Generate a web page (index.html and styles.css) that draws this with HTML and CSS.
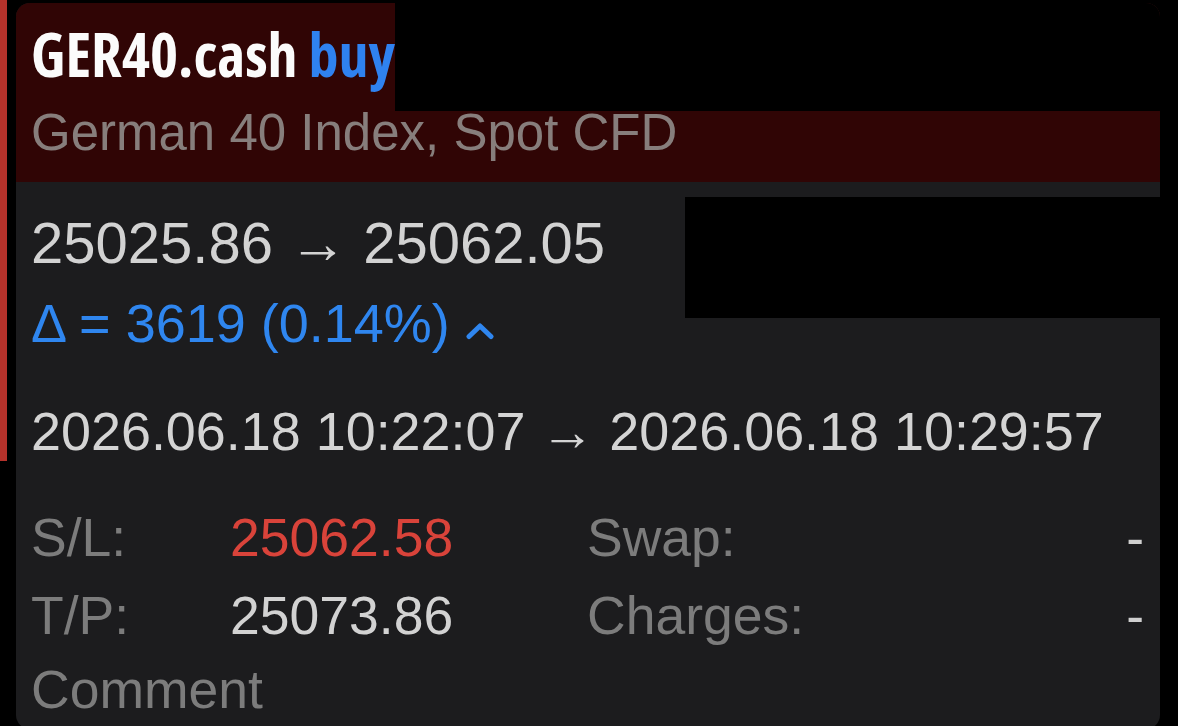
FILE: index.html
```html
<!DOCTYPE html>
<html lang="en">
<head>
<meta charset="utf-8">
<title>GER40.cash buy</title>
<link rel="stylesheet" href="styles.css">
</head>
<body>
<div class="page">
  <div class="stripe"></div>
  <div class="card">
    <div class="header">
      <div class="title">GER40.cash <span class="side">buy</span></div>
      <div class="subtitle">German 40 Index, Spot CFD</div>
    </div>
    <div class="body">
      <div class="prices">25025.86 → 25062.05</div>
      <div class="delta">Δ = 3619 (0.14%)<svg class="chev" width="30" height="18" viewBox="0 0 30 18" aria-hidden="true"><polyline points="4,14.5 15,4 26,14.5" fill="none" stroke="#2f86ef" stroke-width="5" stroke-linecap="round" stroke-linejoin="round"/></svg></div>
      <div class="times">2026.06.18 10:22:07 → 2026.06.18 10:29:57</div>
      <div class="grid">
        <div class="label">S/L:</div>
        <div class="value sl">25062.58</div>
        <div class="label">Swap:</div>
        <div class="value dash">-</div>
        <div class="label">T/P:</div>
        <div class="value">25073.86</div>
        <div class="label">Charges:</div>
        <div class="value dash">-</div>
        <div class="label comment">Comment</div>
      </div>
    </div>
    <div class="redact redact-top"></div>
    <div class="redact redact-mid"></div>
  </div>
</div>
</body>
</html>
```
FILE: styles.css
```css
html, body {
  margin: 0;
  padding: 0;
  background: #000;
  overflow: hidden;
}

body {
  font-family: "Liberation Sans", Arial, sans-serif;
  width: 1178px;
  height: 726px;
}

.page {
  display: flex;
  align-items: flex-start;
}

.stripe {
  width: 7px;
  height: 461px;
  background: #b5322b;
  margin-right: 9px;
  flex: none;
}

.card {
  position: relative;
  flex: none;
  width: 1144px;
  height: 726px;
  margin-top: 3px;
  background: #1c1c1e;
  border-radius: 14px;
  overflow: hidden;
}

.header {
  background: #300505;
  padding: 16px 15px 19px 15px;
}

.title {
  font-family: "Open Sans", sans-serif;
  font-stretch: 75%;
  font-weight: 700;
  font-size: 60px;
  line-height: 70px;
  color: #fbfbfb;
  white-space: nowrap;
}

.title .side {
  color: #2f82f0;
}

.subtitle {
  margin-top: 14px;
  font-size: 51px;
  line-height: 60px;
  color: #877e7c;
  white-space: nowrap;
}

.body {
  padding: 28px 16px 0 15px;
}

.prices {
  font-size: 58px;
  line-height: 66px;
  color: #d2d2d2;
  white-space: nowrap;
}

.delta {
  margin-top: 16px;
  font-size: 54px;
  line-height: 62px;
  color: #2f86ef;
  white-space: nowrap;
}

.chev {
  display: inline-block;
  margin-left: 15px;
  vertical-align: 2px;
}

.times {
  margin-top: 46px;
  font-size: 53.9px;
  line-height: 62px;
  color: #d4d4d4;
  white-space: nowrap;
}

.grid {
  margin-top: 37px;
  display: grid;
  grid-template-columns: 199px 357px 1fr auto;
  grid-auto-rows: 78px;
  font-size: 53.5px;
  line-height: 78px;
  white-space: nowrap;
}

.label {
  color: #7c7c7c;
}

.value {
  color: #d2d2d2;
}

.value.sl {
  color: #d9433a;
}

.value.dash {
  text-align: right;
  color: #cfcfcf;
}

.comment {
  grid-column: 1 / 3;
  margin-top: -4px;
}

.redact {
  position: absolute;
  background: #000;
}

.redact-top {
  left: 379px;
  top: 0;
  right: 0;
  height: 108px;
}

.redact-mid {
  left: 669px;
  top: 194px;
  right: 0;
  height: 121px;
}
```
